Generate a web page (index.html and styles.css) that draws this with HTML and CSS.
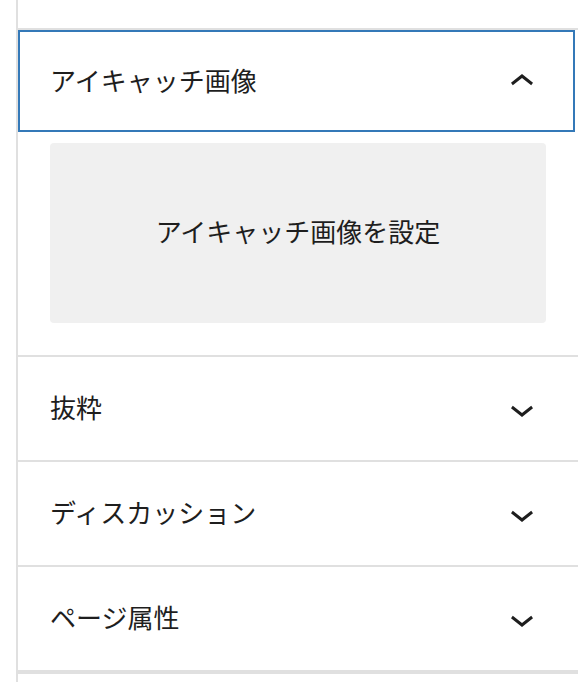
FILE: index.html
```html
<!DOCTYPE html>
<html lang="ja">
<head>
<meta charset="utf-8">
<title>Sidebar</title>
<link rel="stylesheet" href="styles.css">
</head>
<body>
<div class="sidebar">
  <div class="prev"></div>
  <div class="panel">
    <div class="panel-toggle is-focused">
      <span class="title">アイキャッチ画像</span>
      <svg class="chev" viewBox="0 0 24 24" width="48" height="48" aria-hidden="true"><path d="M6.5 12.4L12 8l5.5 4.4-.9 1.2L12 10l-4.6 3.6-.9-1.2z"/></svg>
    </div>
    <div class="panel-body">
      <div class="featured"><span class="featured-label">アイキャッチ画像を設定</span></div>
    </div>
  </div>
  <div class="panel">
    <div class="panel-toggle">
      <span class="title">抜粋</span>
      <svg class="chev" viewBox="0 0 24 24" width="48" height="48" aria-hidden="true"><path d="M17.5 11.6L12 16l-5.5-4.4.9-1.2L12 14l4.6-3.6z"/></svg>
    </div>
  </div>
  <div class="panel">
    <div class="panel-toggle">
      <span class="title">ディスカッション</span>
      <svg class="chev" viewBox="0 0 24 24" width="48" height="48" aria-hidden="true"><path d="M17.5 11.6L12 16l-5.5-4.4.9-1.2L12 14l4.6-3.6z"/></svg>
    </div>
  </div>
  <div class="panel last">
    <div class="panel-toggle">
      <span class="title">ページ属性</span>
      <svg class="chev" viewBox="0 0 24 24" width="48" height="48" aria-hidden="true"><path d="M17.5 11.6L12 16l-5.5-4.4.9-1.2L12 14l4.6-3.6z"/></svg>
    </div>
  </div>
</div>
</body>
</html>
```
FILE: styles.css
```css
html, body {
  margin: 0;
  padding: 0;
  background: #ffffff;
}
body {
  font-family: "Noto Sans CJK JP", "Noto Sans", sans-serif;
  color: #1e1e1e;
}
.sidebar {
  margin-left: 16px;
  border-left: 2px solid #e0e0e0;
  min-height: 682px;
  box-sizing: border-box;
}
.prev {
  height: 28px;
  border-bottom: 2px solid #e0e0e0;
}
.panel {
  border-bottom: 2px solid #e0e0e0;
}
.panel.last {
  border-bottom-width: 4px;
}
.panel-toggle {
  position: relative;
  height: 103px;
  box-sizing: border-box;
  display: flex;
  align-items: center;
  justify-content: space-between;
  padding: 0 32px;
}
.panel-toggle.is-focused::after {
  content: "";
  position: absolute;
  top: 0;
  left: 0;
  right: 3px;
  bottom: 1px;
  border: 2px solid #3479b8;
}
.title {
  font-size: 26px;
  line-height: 36px;
  font-weight: 400;
  padding-bottom: 4px;
}
.chev {
  display: block;
  fill: #1e1e1e;
}
.panel-body {
  padding: 10px 32px 32px;
}
.featured {
  height: 180px;
  background: #f0f0f0;
  border-radius: 4px;
  display: flex;
  align-items: center;
  justify-content: center;
}
.featured-label {
  font-size: 26px;
  line-height: 36px;
  padding-bottom: 4px;
}
```
